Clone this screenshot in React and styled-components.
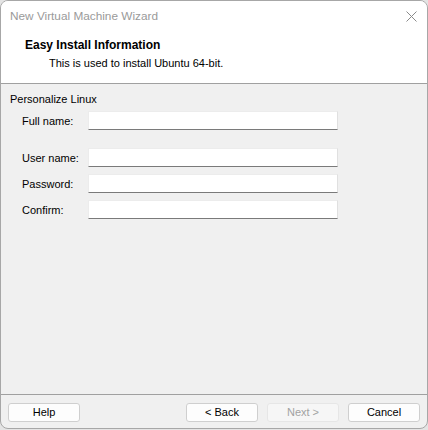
import React from "react";
import styled, { createGlobalStyle } from "styled-components";

const Global = createGlobalStyle`
  html, body { margin: 0; padding: 0; background: #e4e4e4; }
  body { font-family: "Liberation Sans", Arial, sans-serif; }
  * { box-sizing: border-box; }
`;

const Window = styled.div`
  width: 428px;
  height: 429px;
  border: 1px solid #a7a7a7;
  border-radius: 8px;
  overflow: hidden;
  display: flex;
  flex-direction: column;
  background: #f0f0f0;
  color: #000;
  font-size: 11px;
`;

const TitleBar = styled.div`
  height: 30px;
  background: #fff;
  display: flex;
  align-items: center;
  justify-content: space-between;
  padding: 0 10px 0 9px;
`;

const Title = styled.span`
  font-size: 11.8px;
  color: #9a9a9a;
`;

const CloseBtn = styled.div`
  width: 12px;
  height: 12px;
  display: flex;
  align-items: center;
  justify-content: center;
`;

const Header = styled.div`
  height: 53px;
  background: #fff;
  border-bottom: 1px solid #a0a0a0;
  padding: 7px 0 0 24px;
  display: flex;
  flex-direction: column;
`;

const HeaderTitle = styled.div`
  font-weight: bold;
  font-size: 12px;
  line-height: 15px;
`;

const HeaderSub = styled.div`
  font-size: 11px;
  line-height: 14px;
  margin: 3px 0 0 24px;
`;

const Content = styled.div`
  flex: 1;
  padding: 8px 9px 0 9px;
  display: flex;
  flex-direction: column;
`;

const GroupLabel = styled.div`
  line-height: 14px;
`;

const Form = styled.div`
  margin: 5px 0 0 12px;
  display: grid;
  grid-template-columns: 66px 250px;
  row-gap: 7px;
  align-items: center;
`;

const Label = styled.label`
  line-height: 14px;
  margin-top: ${(p) => (p.$spaced ? "11px" : "0")};
`;

const Input = styled.input`
  height: 19px;
  width: 250px;
  border: 1px solid #ececec;
  border-right-color: #e0e0e0;
  border-bottom: 1px solid #7a7a7a;
  background: #fff;
  padding: 0 3px;
  font: inherit;
  margin-top: ${(p) => (p.$spaced ? "11px" : "0")};
  outline: none;
`;

const Footer = styled.div`
  border-top: 1px solid #a0a0a0;
  height: 34px;
  padding: 8px 7px 0 7px;
  display: flex;
  align-items: flex-start;
`;

const Spacer = styled.div`
  flex: 1;
`;

const Button = styled.button`
  width: 72px;
  height: 19px;
  margin-left: ${(p) => p.$gap || 0}px;
  border: 1px solid ${(p) => (p.disabled ? "#e6e6e6" : "#cfcfcf")};
  border-radius: 3px;
  background: ${(p) => (p.disabled ? "#f6f6f6" : "#fdfdfd")};
  color: ${(p) => (p.disabled ? "#a2a2a2" : "#000")};
  font-family: "Liberation Sans", Arial, sans-serif;
  font-size: 11px;
  padding: 0;
  line-height: 17px;
`;

export default function App() {
  return (
    <>
      <Global />
      <Window>
        <TitleBar>
          <Title>New Virtual Machine Wizard</Title>
          <CloseBtn>
            <svg width="11" height="11" viewBox="0 0 11 11">
              <path d="M0.5 0.5 L10.5 10.5 M10.5 0.5 L0.5 10.5" stroke="#8a8a8a" strokeWidth="1" fill="none" />
            </svg>
          </CloseBtn>
        </TitleBar>
        <Header>
          <HeaderTitle>Easy Install Information</HeaderTitle>
          <HeaderSub>This is used to install Ubuntu 64-bit.</HeaderSub>
        </Header>
        <Content>
          <GroupLabel>Personalize Linux</GroupLabel>
          <Form>
            <Label>Full name:</Label>
            <Input />
            <Label $spaced>User name:</Label>
            <Input $spaced />
            <Label>Password:</Label>
            <Input type="password" />
            <Label>Confirm:</Label>
            <Input type="password" />
          </Form>
        </Content>
        <Footer>
          <Button>Help</Button>
          <Spacer />
          <Button>&lt; Back</Button>
          <Button $gap={9} disabled>Next &gt;</Button>
          <Button $gap={9}>Cancel</Button>
        </Footer>
      </Window>
    </>
  );
}
